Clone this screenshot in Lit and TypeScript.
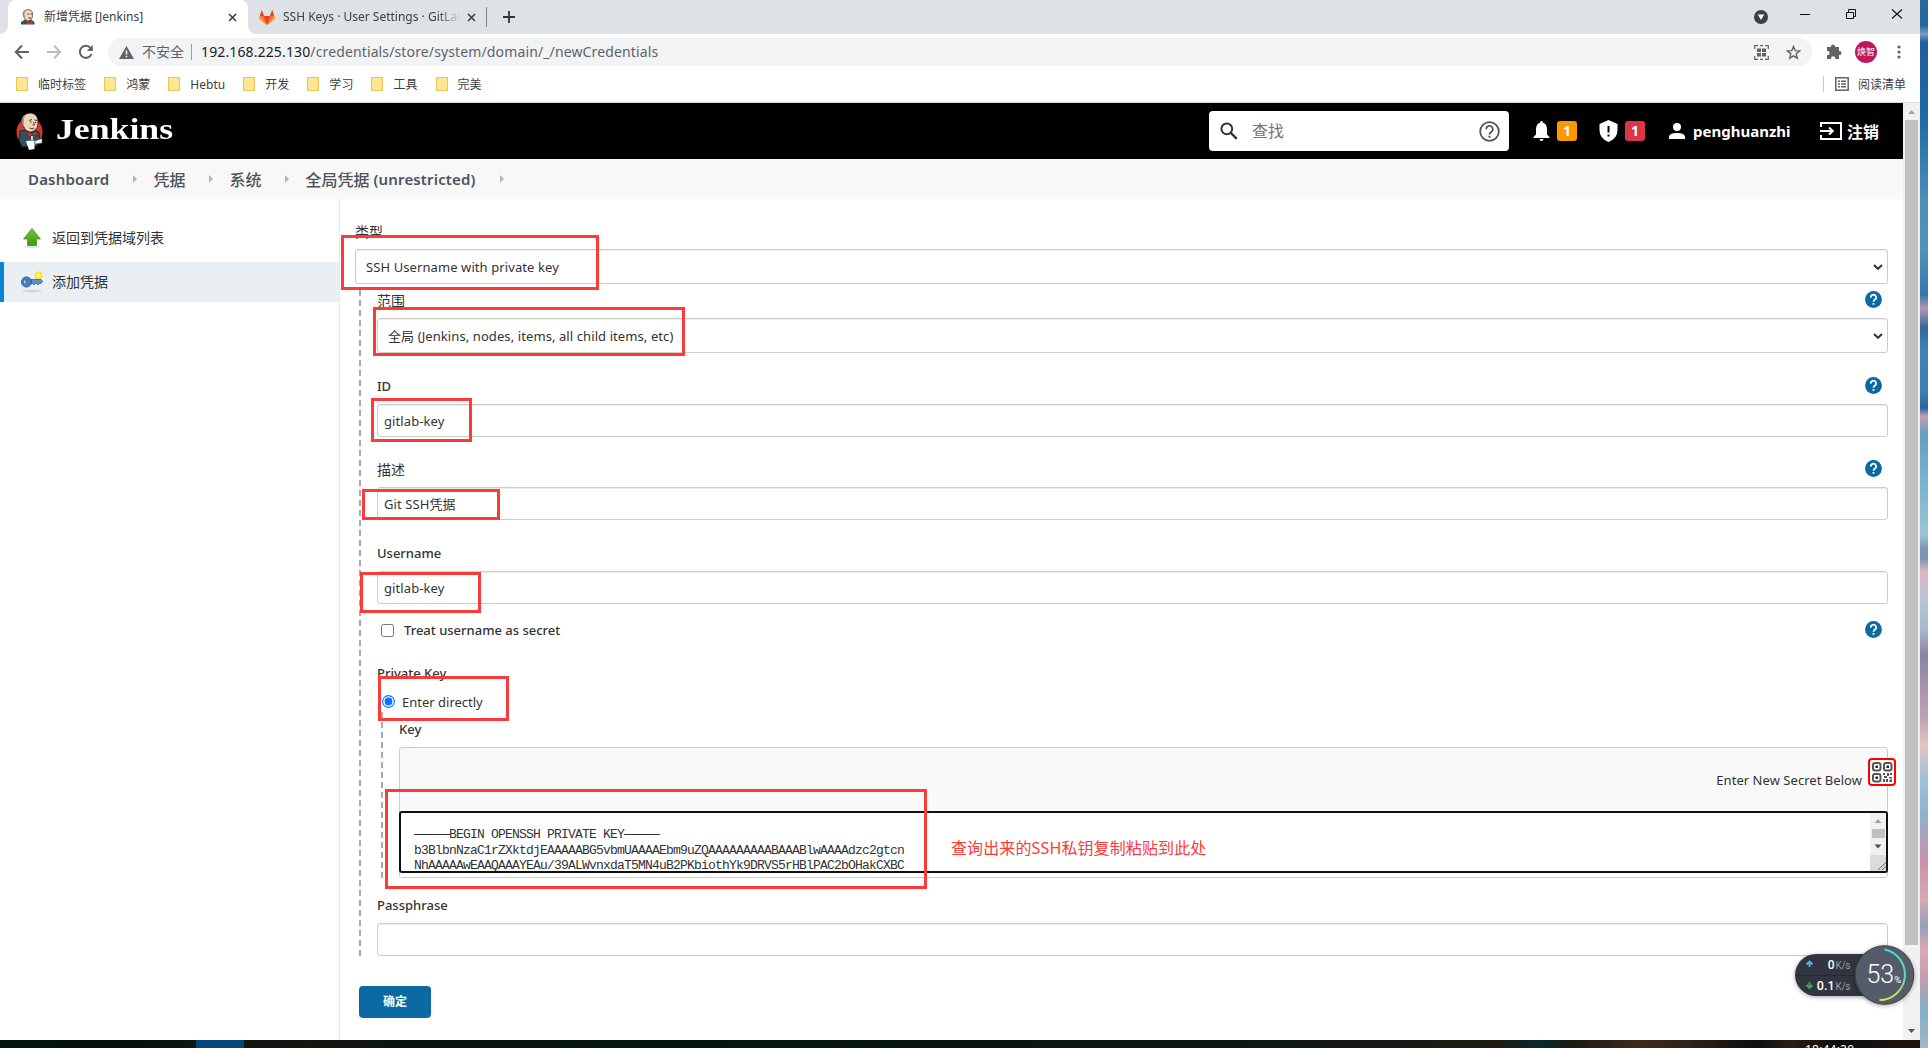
import { LitElement, html, css, svg } from 'lit'
import { customElement, property } from 'lit/decorators.js'

const butler = svg`
  <ellipse cx="13.5" cy="20" rx="13" ry="14" fill="#d33833" />
  <path d="M4 19 L10 18 L14 22 L19 18 L23 20 L24 28 L21 34 L6 35 L3 29 Z" fill="#335061" stroke="#111" stroke-width=".7" />
  <path d="M6 7 Q8 1 15 1 Q22 2 22 10 L21.500 15 Q19 20 14.500 20 Q9 19 8 15 L6 12 Z" fill="#f0d6b7" stroke="#222" stroke-width=".8" />
  <path d="M6 12 Q4.500 5 9 3 Q7.500 7 8 11 L8 15 Z" fill="#999" />
  <path d="M13 8.500 L16 7.500 M18.500 8 L21 8.500 M17.500 10 L18.500 13 L16.500 13 M13.500 16 Q16 17.500 18.500 16" fill="none" stroke="#333" stroke-width=".9" />
  <path d="M14 10 h1.500 M19 10.500 h1.200" stroke="#222" stroke-width="1.200" />
  <path d="M11.500 19.500 L16 22 L20.500 19 L21 24 L16.500 22.800 L12.500 25 Z" fill="#d33833" stroke="#411" stroke-width=".5" />
  <path d="M16 24 V28" stroke="#fff" stroke-width="1.500" />
  <path d="M10 29 L18.500 28.500 L18.500 37 L13 38 Z" fill="#fff" />
  <path d="M19 29 L26 26.500 V31 L19 32 Z" fill="#fff" stroke="#555" stroke-width=".6" />
`

// head and shoulders only, for the tab
const butlerHead = svg`
  <path d="M1 15.500 V13 L5 10.500 H11 L14.500 13 V15.500 Z" fill="#335061" />
  <path d="M3 4.500 Q4 .5 8 .5 Q12.500 .7 12.700 5 L12.300 8.500 Q11 12 8 12 Q5 11.500 4.200 8.500 Z" fill="#f0d6b7" stroke="#444" stroke-width=".7" />
  <path d="M3.200 8 Q1.800 3.500 5 1.600 Q4 4.500 4.700 8.500 Z" fill="#8b8b8b" />
  <path d="M7.500 5 H9 M10.500 5 H12 M8.500 9 H11" stroke="#333" stroke-width=".9" />
  <path d="M6.500 12 L9.500 13.500 L12.300 12 V15.500 L9.500 14.500 L6.500 15.500 Z" fill="#d33833" />
`

const chevron = html`<svg class="chevron" width="10" height="6" viewBox="0 0 10 6"><path d="M1 1 L5 4.800 L9 1" fill="none" stroke="#333" stroke-width="2" /></svg>`

@customElement('help-icon')
export class HelpIcon extends LitElement {
  static styles = css`
    :host {
      display: block;
      width: 17px;
      height: 17px;
    }
    svg {
      display: block;
    }
  `

  render() {
    return html`
      <svg width="17" height="17" viewBox="0 0 17 17">
        <circle cx="8.500" cy="8.500" r="8.400" fill="#0b6aa2" />
        <path d="M5.900 6.600 A2.600 2.600 0 1 1 9.900 8.500 Q8.500 9.300 8.500 10.800" fill="none" stroke="#fff" stroke-width="1.700" />
        <rect x="7.600" y="12" width="1.800" height="1.800" fill="#fff" />
      </svg>
    `
  }
}

@customElement('browser-chrome')
export class BrowserChrome extends LitElement {
  static styles = css`
    :host {
      display: block;
      height: 103px;
      box-sizing: border-box;
      border-bottom: 1px solid #d8d9db;
      background: #fff;
      color: #3c4043;
      font-size: 12px;
    }
    svg {
      display: block;
      flex: none;
    }
    .tabs {
      display: flex;
      height: 34px;
      padding-left: 8px;
      background: #dee1e6;
    }
    .tab {
      display: flex;
      align-items: center;
      box-sizing: border-box;
      width: 240px;
      height: 34px;
      padding: 0 11px 0 12px;
    }
    .tab.active {
      position: relative;
      border-radius: 8px 8px 0 0;
      background: #fff;
    }
    .tab.active::before,
    .tab.active::after {
      content: '';
      position: absolute;
      bottom: 0;
      width: 8px;
      height: 8px;
    }
    .tab.active::before {
      left: -8px;
      background: radial-gradient(circle at 0 0, #dee1e6 7.500px, #fff 8px);
    }
    .tab.active::after {
      right: -8px;
      background: radial-gradient(circle at 100% 0, #dee1e6 7.500px, #fff 8px);
    }
    .tab-title {
      flex: 1;
      margin-left: 8px;
      overflow: hidden;
      white-space: nowrap;
      line-height: 18px;
    }
    .tab.other {
      width: 238px;
      padding: 0 11px;
    }
    .tab.other .tab-title {
      flex: none;
      width: 177px;
      margin-right: 7px;
      -webkit-mask-image: linear-gradient(90deg, #000 155px, transparent 177px);
      mask-image: linear-gradient(90deg, #000 155px, transparent 177px);
    }
    .tab-line {
      width: 1px;
      height: 20px;
      margin-top: 7px;
      background: #808387;
    }
    .plus {
      margin: 11px 0 0 16px;
    }
    .window-buttons {
      margin-left: auto;
    }
    .toolbar {
      display: flex;
      align-items: center;
      height: 36px;
    }
    .nav {
      display: flex;
      gap: 16px;
      flex: none;
      box-sizing: border-box;
      width: 108px;
      padding-left: 14px;
    }
    .omnibox {
      display: flex;
      align-items: center;
      flex: 1;
      height: 28px;
      padding: 0 11px;
      border-radius: 14px;
      background: #f1f3f4;
      font-size: 14px;
      color: #5f6368;
      white-space: nowrap;
    }
    .insecure {
      margin: -2px 0 0 8px;
    }
    .omni-line {
      width: 1px;
      height: 16px;
      margin: 0 9px 0 7px;
      background: #9aa0a6;
    }
    .url {
      flex: 1;
      margin-top: -2px;
      letter-spacing: 0.130px;
    }
    .host {
      color: #202124;
    }
    .actions {
      display: flex;
      gap: 17px;
    }
    .extras {
      display: flex;
      align-items: center;
      width: 108px;
      padding-left: 14px;
      box-sizing: border-box;
    }
    .avatar {
      width: 22px;
      height: 22px;
      margin: 0 20px 0 13px;
      border-radius: 50%;
      background: #c2185b;
      color: #fff;
      font-size: 9px;
      line-height: 21px;
      text-align: center;
    }
    .bookmarks {
      display: flex;
      align-items: center;
      height: 28px;
      padding: 0 14px 0 16px;
    }
    .bookmark {
      display: flex;
      align-items: center;
      gap: 10px;
      margin-right: 18px;
      white-space: nowrap;
      letter-spacing: 0.040px;
    }
    .folder {
      width: 10px;
      height: 12px;
      border: 1px solid #eac54f;
      background: #ffe694;
    }
    .reading {
      display: flex;
      align-items: center;
      gap: 9px;
      margin-left: auto;
      padding-left: 11px;
      height: 16px;
      border-left: 1px solid #c6c8cb;
    }
  `

  bookmarks = ['临时标签', '鸿蒙', 'Hebtu', '开发', '学习', '工具', '完美']

  closeIcon() {
    return html`<svg width="9" height="9" viewBox="0 0 9 9"><path d="M1 1 L8 8 M8 1 L1 8" stroke="#3c4043" stroke-width="1.600" /></svg>`
  }

  render() {
    return html`
      <div class="tabs">
        <div class="tab active">
          <svg width="16" height="16" viewBox="0 0 16 16">${butlerHead}</svg>
          <div class="tab-title">新增凭据 [Jenkins]</div>
          ${this.closeIcon()}
        </div>
        <div class="tab other">
          <svg width="16" height="15" viewBox="0 0 16 15">
            <path d="M8 15 L0 8.800 L2.700 0 L5 6 H11 L13.300 0 L16 8.800 Z" fill="#fc6d26" />
            <path d="M8 15 L5 6 H11 Z" fill="#e24329" />
            <path d="M0 8.800 L1 6 L8 15 Z M16 8.800 L15 6 L8 15 Z" fill="#fca326" />
            <path d="M1 6 L2.700 0 L5 6 Z M15 6 L13.300 0 L11 6 Z" fill="#e24329" />
          </svg>
          <div class="tab-title">SSH Keys · User Settings · GitLab</div>
          ${this.closeIcon()}
        </div>
        <div class="tab-line"></div>
        <svg class="plus" width="12" height="12" viewBox="0 0 12 12"><path d="M6 0 V12 M0 6 H12" stroke="#333" stroke-width="1.800" /></svg>
        <svg class="window-buttons" width="166" height="34" viewBox="0 0 166 34">
          <circle cx="7" cy="17" r="7" fill="#3c4043" />
          <path d="M3.800 14.500 H10.200 L7 20 Z" fill="#fff" />
          <path d="M46 14.500 H56" stroke="#111" />
          <path d="M92.500 12.500 H99.500 V18.500 H92.500 Z M94.500 12 V9.500 H101.500 V16.500 H100" fill="none" stroke="#111" />
          <path d="M138 9.500 L148 18.500 M148 9.500 L138 18.500" stroke="#111" stroke-width="1.100" />
        </svg>
      </div>
      <div class="toolbar">
        <div class="nav">
          <svg width="16" height="16" viewBox="0 0 16 16"><path d="M15 8 H2 M8 1.500 L1.800 8 L8 14.500" fill="none" stroke="#5f6368" stroke-width="2" /></svg>
          <svg width="16" height="16" viewBox="0 0 16 16"><path d="M1 8 H14 M8 1.500 L14.200 8 L8 14.500" fill="none" stroke="#babcbe" stroke-width="2" /></svg>
          <svg width="16" height="16" viewBox="0 0 16 16"><path d="M13.500 10 A6 6 0 1 1 12.500 4" fill="none" stroke="#5f6368" stroke-width="2" /><path d="M14.800 1 V7 H8.800 Z" fill="#5f6368" /></svg>
        </div>
        <div class="omnibox">
          <svg width="15" height="13" viewBox="0 0 15 13"><path d="M7.500 0 L15 13 H0 Z" fill="#5f6368" /><path d="M7.500 4.500 V8.500 M7.500 9.800 V11.300" stroke="#fff" stroke-width="1.500" /></svg>
          <span class="insecure">不安全</span>
          <span class="omni-line"></span>
          <span class="url"><span class="host">192.168.225.130</span>/credentials/store/system/domain/_/newCredentials</span>
          <div class="actions">
            <svg width="15" height="15" viewBox="0 0 15 15">
              <path d="M.7 4 V.7 H4 M6 .7 H9 M11 .7 H14.300 V4 M14.300 11 V14.300 H11 M9 14.300 H6 M4 14.300 H.7 V11" fill="none" stroke="#5f6368" stroke-width="1.200" />
              <path d="M3 3.500 H7 V7 H3 Z M8 3.500 H12 V7 H8 Z M3 8 H7 V11.500 H3 Z M8 8 H12 V11.500 H8 Z" fill="#5f6368" />
            </svg>
            <svg width="15" height="15" viewBox="0 0 15 15"><path d="M7.500 1.500 L9.200 5.600 L13.600 5.900 L10.200 8.800 L11.300 13.200 L7.500 10.800 L3.700 13.200 L4.800 8.800 L1.400 5.900 L5.800 5.600 Z" fill="none" stroke="#5f6368" stroke-width="1.400" /></svg>
          </div>
        </div>
        <div class="extras">
          <svg width="16" height="16" viewBox="0 0 16 16"><path d="M1 3 H5 V2.500 A2 2 0 0 1 9 2.500 V3 H13 V7 H13.500 A2 2 0 0 1 13.500 11 H13 V15 H9.300 V14.500 A2 2 0 0 0 5 14.500 V15 H1 V11.200 H1.500 A2 2 0 0 0 1.500 7 H1 Z" fill="#5f6368" /></svg>
          <div class="avatar">焕智</div>
          <svg width="4" height="14" viewBox="0 0 4 14"><circle cx="2" cy="2" r="1.600" fill="#5f6368" /><circle cx="2" cy="7" r="1.600" fill="#5f6368" /><circle cx="2" cy="12" r="1.600" fill="#5f6368" /></svg>
        </div>
      </div>
      <div class="bookmarks">
        ${this.bookmarks.map(name => html`<div class="bookmark"><span class="folder"></span>${name}</div>`)}
        <div class="reading">
          <svg width="14" height="14" viewBox="0 0 14 14">
            <rect x=".8" y=".8" width="12.400" height="12.400" fill="none" stroke="#5f6368" stroke-width="1.500" />
            <path d="M3 4.200 H5 M6 4.200 H11 M3 7 H5 M6 7 H11 M3 9.800 H5 M6 9.800 H11" stroke="#5f6368" stroke-width="1.500" />
          </svg>
          阅读清单
        </div>
      </div>
    `
  }
}

@customElement('jenkins-header')
export class JenkinsHeader extends LitElement {
  static styles = css`
    :host {
      display: block;
    }
    svg {
      display: block;
      flex: none;
    }
    .header {
      display: flex;
      align-items: center;
      height: 56px;
      padding: 0 24px 0 16px;
      background: #000;
      color: #fff;
      font-weight: 700;
    }
    .logo-text {
      margin: -5px 0 0 12px;
      font: 700 30px/36px 'Liberation Serif', serif;
      transform: scaleX(1.190);
      transform-origin: left;
    }
    .search {
      display: flex;
      align-items: center;
      box-sizing: border-box;
      width: 300px;
      height: 40px;
      margin-left: auto;
      padding: 0 9px 0 11px;
      border-radius: 4px;
      background: #fff;
      color: #757575;
      font-size: 16px;
      font-weight: 400;
    }
    .placeholder {
      flex: 1;
      margin: -2px 0 0 14px;
    }
    .bell {
      margin-left: 24px;
    }
    .badge {
      width: 20px;
      height: 20px;
      border-radius: 3px;
      font-size: 14px;
      line-height: 20px;
      text-align: center;
    }
    .badge.warn {
      margin: 0 22px 0 7px;
      background: #ff9800;
    }
    .badge.danger {
      margin: 0 24px 0 7px;
      background: #dc3545;
    }
    .user {
      width: 98px;
      margin: 0 29px 0 8px;
      font-size: 15px;
    }
    .logout {
      margin-left: 5px;
      font-size: 16px;
      white-space: nowrap;
    }
    .crumbs {
      display: flex;
      align-items: center;
      height: 40px;
      padding-left: 28px;
      background: #f8f8f8;
      color: #4d545d;
      font-size: 15px;
      font-weight: 600;
      letter-spacing: 0.180px;
    }
    .crumb {
      display: flex;
      align-items: center;
      margin-top: -1px;
      white-space: nowrap;
    }
    .crumb.zh {
      font-size: 16px;
      font-weight: 500;
      letter-spacing: 0;
    }
    .crumb.zh span {
      font-size: 15px;
      font-weight: 600;
      letter-spacing: 0.150px;
    }
    .crumb::after {
      content: '';
      margin: 0 16px 0 24px;
      border: 4px solid transparent;
      border-left-color: #b4b6ba;
      border-right: 0;
    }
  `

  render() {
    return html`
      <div class="header">
        <svg width="28" height="39" viewBox="0 0 28 39">${butler}</svg>
        <div class="logo-text">Jenkins</div>
        <div class="search">
          <svg width="18" height="18" viewBox="0 0 18 18"><circle cx="6.800" cy="6.800" r="5.400" fill="none" stroke="#333" stroke-width="2" /><path d="M10.800 10.800 L16.800 16.800" stroke="#333" stroke-width="2.400" /></svg>
          <span class="placeholder">查找</span>
          <svg width="21" height="21" viewBox="0 0 21 21">
            <circle cx="10.500" cy="10.500" r="9.300" fill="none" stroke="#4d545d" stroke-width="1.800" />
            <path d="M7.200 8.200 A3.300 3.300 0 1 1 12.300 10.900 Q10.500 12 10.500 13.600" fill="none" stroke="#4d545d" stroke-width="1.800" />
            <rect x="9.500" y="14.700" width="2" height="2" fill="#4d545d" />
          </svg>
        </div>
        <svg class="bell" width="17" height="20" viewBox="0 0 17 20"><path d="M8.500 0 Q10 0 10 1.800 Q14 3 14 8.500 V13.500 L16.500 16 V17 H.5 V16 L3 13.500 V8.500 Q3 3 7 1.800 Q7 0 8.500 0 Z M6.500 18 H10.500 Q10.500 20 8.500 20 Q6.500 20 6.500 18 Z" fill="#fff" /></svg>
        <div class="badge warn">1</div>
        <svg width="19" height="22" viewBox="0 0 19 22"><path d="M9.500 0 L18.500 4 V10 Q18.500 18.500 9.500 22 Q.5 18.500 .5 10 V4 Z" fill="#fff" /><path d="M9.500 6 V12.500 M9.500 14.500 V16.500" stroke="#000" stroke-width="2" /></svg>
        <div class="badge danger">1</div>
        <svg width="16" height="16" viewBox="0 0 16 16"><circle cx="8" cy="4" r="4" fill="#fff" /><path d="M0 16 V14 Q0 10 8 10 Q16 10 16 14 V16 Z" fill="#fff" /></svg>
        <div class="user">penghuanzhi</div>
        <svg width="22" height="18" viewBox="0 0 22 18"><path d="M1 5 V1 H21 V17 H1 V13 M0 9 H12 M9 5.500 L12.800 9 L9 12.500" fill="none" stroke="#fff" stroke-width="2" /></svg>
        <div class="logout">注销</div>
      </div>
      <div class="crumbs">
        <div class="crumb">Dashboard</div>
        <div class="crumb zh">凭据</div>
        <div class="crumb zh">系统</div>
        <div class="crumb zh">全局凭据&nbsp;<span>(unrestricted)</span></div>
      </div>
    `
  }
}

@customElement('form-field')
export class FormField extends LitElement {
  @property() label = ''
  @property() value = ''
  @property({ type: Boolean }) select = false
  @property({ type: Boolean }) help = false

  static styles = css`
    :host {
      display: block;
    }
    .label {
      display: flex;
      align-items: center;
      height: 20px;
      padding-right: 6px;
      font-weight: 500;
      font-size: 13px;
    }
    .label.zh {
      font-size: 14px;
      font-weight: 400;
    }
    .label span {
      margin-top: -1px;
    }
    help-icon {
      margin: -2px 0 0 auto;
    }
    .box {
      display: flex;
      align-items: center;
      box-sizing: border-box;
      height: 33px;
      margin-top: 8px;
      padding: 0 4px 0 6px;
      border: 1px solid #ccc;
      border-radius: 3px;
      background: #fff;
      box-shadow: inset 0 1px 1px rgba(0, 0, 0, 0.075);
      letter-spacing: 0.090px;
      white-space: nowrap;
    }
    .box.select {
      height: 35px;
      padding-left: 10px;
    }
    .chevron {
      margin-left: auto;
    }
  `

  render() {
    const zh = /[\u4e00-\u9fff]/.test(this.label)
    return html`
      <div class="label ${zh ? 'zh' : ''}"><span>${this.label}</span>${this.help ? html`<help-icon></help-icon>` : ''}</div>
      <div class="box ${this.select ? 'select' : ''}">${this.value}${this.select ? chevron : ''}</div>
    `
  }
}

@customElement('app-root')
export class AppRoot extends LitElement {
  static styles = css`
    :host {
      display: block;
      position: relative;
      width: 1928px;
      height: 1048px;
      overflow: hidden;
      font-family: 'Noto Sans', 'Noto Sans CJK SC', sans-serif;
      font-size: 13px;
      color: #333;
    }
    svg {
      display: block;
    }
    .desktop {
      display: grid;
      grid-template-columns: 1920px 8px;
      grid-template-rows: 1040px 8px;
    }
    .wallpaper {
      grid-row: 1 / 3;
      grid-column: 2;
      background: linear-gradient(#2f68a0 0, #2466a0 25px, #7f9cc2 34px, #1f609c 42px, #1e66a2 110px, #4a8fb8 200px, #4f94b8 250px, #3577a8 295px, #b096b4 308px, #35679a 328px, #3c83b4 350px, #417fae 390px, #2d64a0 408px, #c49bb4 416px, #62a0c4 435px, #78b2cc 480px, #9cc4d6 535px, #7f96b4 548px, #7994b2 558px, #e0b4c2 572px, #b4c6d6 600px, #a8b8cc 630px, #8b84a4 655px, #c2a2b8 720px, #e4c4c4 745px, #9fc0d8 780px, #8fb2cc 815px, #c894a8 860px, #d8a8b4 900px, #94a0bc 925px, #dba8b4 950px, #c49cae 980px, #7fb0c8 1010px, #a8b4c4 1048px);
    }
    .window {
      grid-column: 1;
      background: #fff;
    }
    .taskbar {
      display: flex;
      justify-content: flex-end;
      grid-column: 1;
      overflow: hidden;
      background: linear-gradient(90deg, transparent 196px, #05457a 196px, #05457a 244px, transparent 244px),
        linear-gradient(90deg, #021412 0, #02100f 130px, #0a1710 190px, #17140f 320px, #071512 400px, #031412 700px, #0a1716 1200px, #1e1a12 1500px, #06292b 1540px, #1c1813 1570px, #3c2a1c 1640px, #2e2116 1690px, #0d0e0e 1760px, #2b1d12 1790px, #0c0c0c 1840px, #1d1410 1900px);
      color: #fff;
      font-size: 12px;
      line-height: 14px;
    }
    .clock {
      width: 115px;
      padding-top: 3px;
      letter-spacing: 0.200px;
    }
    .page {
      display: grid;
      grid-template-columns: 1903px 17px;
      height: 937px;
    }
    .layout {
      display: grid;
      grid-template-columns: 340px 1fr;
      height: 841px;
    }
    .side {
      box-sizing: border-box;
      padding-top: 19px;
      border-right: 1px solid #e8e8e8;
    }
    .task {
      display: flex;
      align-items: center;
      gap: 9px;
      height: 40px;
      margin-bottom: 4px;
      padding-left: 21px;
      font-size: 14px;
    }
    .task span {
      margin-top: -2px;
    }
    .task.current {
      padding-left: 17px;
      border-left: 4px solid #0b84d3;
      background: #e9eff2;
    }
    .main {
      padding: 22px 15px 0;
    }
    .dashed {
      background: repeating-linear-gradient(#aaa 0 6px, transparent 6px 10px) 0 0 / 2px 100% no-repeat;
    }
    .group {
      margin-left: 4px;
      padding-left: 18px;
      background-position-y: 6px;
    }
    .scope {
      padding-top: 6px;
    }
    .gap-22 {
      margin-top: 22px;
    }
    .gap-23 {
      margin-top: 23px;
    }
    .passphrase {
      margin-top: 17px;
    }
    .row {
      display: flex;
      align-items: center;
      height: 20px;
    }
    .check-row {
      margin-top: 16px;
      padding: 0 6px 0 4px;
      font-weight: 500;
    }
    .check-row help-icon {
      margin: -2px 0 0 auto;
    }
    .checkbox {
      box-sizing: border-box;
      width: 13px;
      height: 13px;
      margin-right: 10px;
      border: 1px solid #767676;
      border-radius: 2.500px;
    }
    .title {
      font-weight: 500;
    }
    .radio-row {
      margin-top: 9px;
      padding-left: 5px;
      gap: 7px;
    }
    .radio-row svg {
      margin-top: -2px;
    }
    .key-group {
      margin-left: 4px;
      padding: 7px 0 0 18px;
    }
    .key-box {
      box-sizing: border-box;
      height: 131px;
      margin-top: 8px;
      border: 1px solid #ccc;
      border-radius: 3px;
      background: #f9f9f9;
    }
    .key-hint {
      height: 63px;
      padding-right: 25px;
      line-height: 64px;
      text-align: right;
      letter-spacing: 0.040px;
    }
    .textarea {
      display: flex;
      box-sizing: border-box;
      height: 62px;
      margin: 0 -1px;
      border: 2px solid #101010;
      border-radius: 3px;
      background: #fff;
      overflow: hidden;
    }
    .key-text {
      flex: 1;
      padding: 14px 0 0 13px;
      font: 13px/15.700px 'Liberation Mono', monospace;
      letter-spacing: -0.800px;
      white-space: pre;
    }
    .key-foot {
      height: 4px;
      background: #fff;
    }
    .submit {
      width: 72px;
      height: 32px;
      margin: 30px 0 0 4px;
      border-radius: 4px;
      background: #0b6aa2;
      color: #fff;
      font-size: 12px;
      font-weight: 700;
      line-height: 32px;
      text-align: center;
    }
    .marks,
    .speed,
    .qr {
      position: absolute;
      left: 0;
      top: 0;
      pointer-events: none;
    }
    .qr {
      left: 1868px;
      top: 758px;
    }
    .speed {
      left: 1785px;
      top: 935px;
    }
    .note {
      position: absolute;
      left: 951px;
      top: 836px;
      color: #fc3a3a;
      font-size: 16px;
      line-height: 24px;
      letter-spacing: 0.120px;
      white-space: nowrap;
    }
  `

  // x1, y1, x2, y2 of each annotation frame
  marks = [
    [341, 235, 599, 290],
    [373, 307, 685, 356],
    [371, 398, 472, 442],
    [362, 489, 500, 520],
    [360, 572, 481, 613],
    [378, 676, 509, 721],
    [385, 789, 927, 889],
  ]

  keyText = `—————BEGIN OPENSSH PRIVATE KEY—————
b3BlbnNzaC1rZXktdjEAAAAABG5vbmUAAAAEbm9uZQAAAAAAAAABAAABlwAAAAdzc2gtcn
NhAAAAAwEAAQAAAYEAu/39ALWvnxdaT5MN4uB2PKbiothYk9DRVS5rHBlPAC2bOHakCXBC`

  renderSide() {
    return html`
      <div class="side">
        <div class="task">
          <svg width="22" height="22" viewBox="0 0 22 22">
            <defs><linearGradient id="up" x1="0" y1="0" x2="0" y2="1"><stop offset="0" stop-color="#7ac143" /><stop offset="1" stop-color="#3c9a08" /></linearGradient></defs>
            <ellipse cx="11" cy="19.500" rx="8" ry="1.300" fill="#ddd" />
            <path d="M11 1.500 L19.500 12 H15.500 V18.500 H6.500 V12 H2.500 Z" fill="url(#up)" stroke="#4d9a26" stroke-width=".8" />
          </svg>
          <span>返回到凭据域列表</span>
        </div>
        <div class="task current">
          <svg width="22" height="22" viewBox="0 0 22 22">
            <ellipse cx="11" cy="20" rx="10" ry="1.200" fill="#cdd2d4" />
            <circle cx="17.500" cy="4.500" r="3" fill="#fdf6a0" stroke="#f8e71c" stroke-width="1.800" />
            <path d="M9 8.500 H20 L21.500 10.500 L20 12.500 H18 L17 14 L15.500 12.500 H14 L13 14 L11.500 12.500 H9 Z" fill="#5b8fd0" stroke="#2f5f9f" stroke-width=".8" />
            <circle cx="5.500" cy="11" r="5" fill="#4a7ec2" stroke="#2a5590" stroke-width=".9" />
            <ellipse cx="3.800" cy="11" rx="1.200" ry="2" fill="#e9eff2" stroke="#2a5590" stroke-width=".7" />
          </svg>
          <span>添加凭据</span>
        </div>
      </div>
    `
  }

  renderForm() {
    return html`
      <div class="main">
        <form-field label="类型" value="SSH Username with private key" select></form-field>
        <div class="group dashed">
          <form-field class="scope" label="范围" value="全局 (Jenkins, nodes, items, all child items, etc)" select help></form-field>
          <form-field class="gap-23" label="ID" value="gitlab-key" help></form-field>
          <form-field class="gap-22" label="描述" value="Git SSH凭据" help></form-field>
          <form-field class="gap-23" label="Username" value="gitlab-key"></form-field>
          <div class="row check-row"><span class="checkbox"></span>Treat username as secret<help-icon></help-icon></div>
          <div class="row title gap-23">Private Key</div>
          <div class="row radio-row">
            <svg width="13" height="13" viewBox="0 0 13 13"><circle cx="6.500" cy="6.500" r="5.900" fill="#fff" stroke="#0075ff" stroke-width="1.100" /><circle cx="6.500" cy="6.500" r="3.900" fill="#0075ff" /></svg>
            Enter directly
          </div>
          <div class="key-group dashed">
            <div class="row title">Key</div>
            <div class="key-box">
              <div class="key-hint">Enter New Secret Below</div>
              <div class="textarea">
                <div class="key-text">${this.keyText}</div>
                <svg width="16" height="58" viewBox="0 0 16 58">
                  <rect width="16" height="58" fill="#f1f1f1" />
                  <path d="M4.500 10 L8 6 L11.500 10 Z" fill="#a3a3a3" />
                  <rect x="2" y="16" width="13" height="9" fill="#c1c1c1" />
                  <path d="M4.500 31.500 H11.500 L8 35.500 Z" fill="#505050" />
                  <rect y="42" width="16" height="16" fill="#dcdcdc" />
                  <path d="M8 57 L16 49.500 M12 57 L16 53.500" stroke="#666" />
                </svg>
              </div>
              <div class="key-foot"></div>
            </div>
          </div>
          <form-field class="passphrase" label="Passphrase"></form-field>
        </div>
        <div class="submit">确定</div>
      </div>
    `
  }

  renderOverlays() {
    return html`
      <svg class="marks" width="1920" height="1040" viewBox="0 0 1920 1040">
        ${this.marks.map(([x1, y1, x2, y2]) => svg`<rect x=${x1 + 1.5} y=${y1 + 1.5} width=${x2 - x1 - 3} height=${y2 - y1 - 3} fill="none" stroke="#fc3a3a" stroke-width="3" />`)}
      </svg>
      <div class="note">查询出来的SSH私钥复制粘贴到此处</div>
      <svg class="qr" width="28" height="28" viewBox="0 0 28 28">
        <rect x="1" y="1" width="26" height="26" rx="3" fill="#fff" stroke="#f00" stroke-width="2" />
        ${[[5, 5], [16, 5], [5, 16]].map(([x, y]) => svg`
          <rect x=${x} y=${y} width="7.500" height="7.500" rx="2" fill="none" stroke="#555" stroke-width="2" />
          <rect x=${x + 2.5} y=${y + 2.5} width="2.500" height="2.500" fill="#222" />`)}
        <path d="M15 15 h2 v2 h-2 Z M19 15 h2 v3 h-2 Z M22 15 h2 v2 h-2 Z M16 18 h3 v2 h-3 Z M21 19 h3 v1.500 h-3 Z M15 21 h2 v3 h-2 Z M18 21 h2 v3 h-2 Z M21.500 21.500 h2.500 v2.500 h-2.500 Z" fill="#555" />
      </svg>
      <svg class="speed" width="140" height="80" viewBox="0 0 140 80">
        <defs>
          <linearGradient id="ring" x1="0" y1="0" x2="0" y2="1"><stop offset="0" stop-color="#3fd8e0" /><stop offset=".6" stop-color="#6fdc9a" /><stop offset="1" stop-color="#e2e04a" /></linearGradient>
          <filter id="shade" x="-20%" y="-20%" width="140%" height="140%"><feDropShadow dx="0" dy="1" stdDeviation="2" flood-opacity=".35" /></filter>
        </defs>
        <rect x="10" y="19" width="95" height="42" rx="21" fill="#30343f" filter="url(#shade)" />
        <path d="M11 40.500 H72" stroke="#252933" />
        <circle cx="99.500" cy="40" r="29.300" fill="#555b69" stroke="#3c414d" filter="url(#shade)" />
        <path d="M99.500 14.500 A25.500 25.500 0 0 1 94.500 65" fill="none" stroke="url(#ring)" stroke-width="2" />
        <path d="M24.500 32 V27 M21.500 29.500 L24.500 26.500 L27.500 29.500" fill="none" stroke="#4db5f0" stroke-width="1.800" />
        <path d="M24.500 47 V52 M21.500 50 L24.500 53 L27.500 50" fill="none" stroke="#35b44a" stroke-width="1.800" />
        <g font-family="Roboto, sans-serif">
          <text x="49.500" y="33.500" text-anchor="end" font-size="12" font-weight="500" fill="#fff">0</text>
          <text x="50.500" y="34" font-size="10" textLength="15" fill="#9a9ea8">K/s</text>
          <text x="49.500" y="55" text-anchor="end" font-size="12.500" font-weight="500" fill="#fff">0.1</text>
          <text x="50.500" y="55" font-size="10" textLength="15" fill="#9a9ea8">K/s</text>
          <text x="81.500" y="48" font-size="25" font-weight="300" textLength="27.500" fill="#fff">53</text>
          <text x="109.500" y="48" font-size="9" fill="#fff">%</text>
        </g>
      </svg>
    `
  }

  render() {
    return html`
      <div class="desktop">
        <div class="window">
          <browser-chrome></browser-chrome>
          <div class="page">
            <div>
              <jenkins-header></jenkins-header>
              <div class="layout">${this.renderSide()} ${this.renderForm()}</div>
            </div>
            <svg width="17" height="937" viewBox="0 0 17 937">
              <rect width="17" height="937" fill="#f1f1f1" />
              <path d="M5 11 L8.500 7 L12 11 Z" fill="#a3a3a3" />
              <rect x="2" y="17" width="13" height="825" fill="#c1c1c1" />
              <path d="M5 926 H12 L8.500 930 Z" fill="#505050" />
            </svg>
          </div>
        </div>
        <div class="wallpaper"></div>
        <div class="taskbar"><div class="clock">18:44:20</div></div>
      </div>
      ${this.renderOverlays()}
    `
  }
}
